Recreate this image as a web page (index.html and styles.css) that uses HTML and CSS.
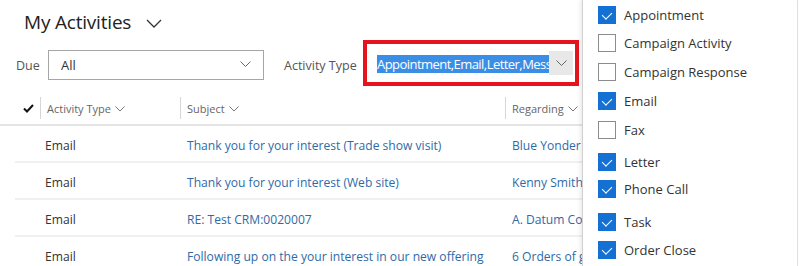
FILE: index.html
```html
<!DOCTYPE html>
<html>
<head>
<meta charset="utf-8">
<link rel="stylesheet" href="styles.css">
</head>
<body>
<div class="page">
  <div class="title-row">
    <h1 class="title">My Activities</h1>
    <svg class="title-chev" width="16" height="9" viewBox="0 0 16 9"><path d="M1 1 L8 8 L15 1" fill="none" stroke="#333" stroke-width="1.3"/></svg>
  </div>
  <div class="filter-row">
    <span class="flabel due">Due</span>
    <div class="select">
      <span class="select-text">All</span>
      <svg class="chev" width="11" height="6" viewBox="0 0 11 6"><path d="M0.5 0.5 L5.5 5.5 L10.5 0.5" fill="none" stroke="#666" stroke-width="1"/></svg>
    </div>
    <span class="flabel atype">Activity Type</span>
    <div class="redbox">
      <div class="multi">
        <span class="hl">Appointment,Email,Letter,Message</span>
      </div>
      <div class="multi-btn">
        <svg width="11" height="6" viewBox="0 0 11 6"><path d="M0.5 0.5 L5.5 5.5 L10.5 0.5" fill="none" stroke="#666" stroke-width="1"/></svg>
      </div>
    </div>
  </div>
  <div class="thead">
    <div class="th check">
      <svg width="11" height="9" viewBox="0 0 11 9"><path d="M1 4.5 L4 7.5 L10 1" fill="none" stroke="#111" stroke-width="2"/></svg>
    </div>
    <div class="th sep">Activity Type <svg class="hchev" width="10" height="6" viewBox="0 0 10 6"><path d="M0.5 0.5 L5 5 L9.5 0.5" fill="none" stroke="#777" stroke-width="1"/></svg></div>
    <div class="th sep">Subject <svg class="hchev" width="10" height="6" viewBox="0 0 10 6"><path d="M0.5 0.5 L5 5 L9.5 0.5" fill="none" stroke="#777" stroke-width="1"/></svg></div>
    <div class="th sep">Regarding <svg class="hchev" width="10" height="6" viewBox="0 0 10 6"><path d="M0.5 0.5 L5 5 L9.5 0.5" fill="none" stroke="#777" stroke-width="1"/></svg></div>
  </div>
  <div class="tbody">
    <div class="tr"><div></div><div class="td type">Email</div><div class="td link">Thank you for your interest (Trade show visit)</div><div class="td link">Blue Yonder Airlines</div></div>
    <div class="tr"><div></div><div class="td type">Email</div><div class="td link">Thank you for your interest (Web site)</div><div class="td link">Kenny Smith</div></div>
    <div class="tr"><div></div><div class="td type">Email</div><div class="td link">RE: Test CRM:0020007</div><div class="td link">A. Datum Corporation</div></div>
    <div class="tr"><div></div><div class="td type">Email</div><div class="td link">Following up on the your interest in our new offering</div><div class="td link">6 Orders of gloves</div></div>
  </div>
</div>
<div class="panel">
  <div class="opt"><span class="cb on"></span><span class="olabel">Appointment</span></div>
  <div class="opt g28"><span class="cb"></span><span class="olabel">Campaign Activity</span></div>
  <div class="opt"><span class="cb"></span><span class="olabel">Campaign Response</span></div>
  <div class="opt"><span class="cb on"></span><span class="olabel">Email</span></div>
  <div class="opt"><span class="cb"></span><span class="olabel">Fax</span></div>
  <div class="opt g32"><span class="cb on"></span><span class="olabel">Letter</span></div>
  <div class="opt g27"><span class="cb on"></span><span class="olabel">Phone Call</span></div>
  <div class="opt g33"><span class="cb on"></span><span class="olabel">Task</span></div>
  <div class="opt g28"><span class="cb on"></span><span class="olabel">Order Close</span></div>
</div>
</body>
</html>
```
FILE: styles.css
```css
* { box-sizing: border-box; }
html, body { margin: 0; padding: 0; }
body {
  width: 799px;
  height: 266px;
  overflow: hidden;
  position: relative;
  background: #fff;
  font-family: "Open Sans", "Noto Sans", sans-serif;
  color: #333;
}
.page { width: 799px; }
.title-row {
  height: 42px;
  display: flex;
  align-items: center;
  padding-left: 24px;
  padding-top: 2px;
}
.title {
  margin: 0;
  font-size: 19px;
  font-weight: 400;
  color: #222;
  letter-spacing: -0.2px;
}
.title-chev { margin-left: 15px; margin-top: 2px; }
.filter-row {
  height: 46px;
  display: flex;
  align-items: center;
  margin-top: -2px;
}
.flabel { font-size: 12.5px; color: #555; margin-top: 4px; }
.due { margin-left: 16px; width: 32px; }
.select {
  width: 216px;
  height: 30px;
  margin-top: 4px;
  border: 1px solid #a6a6a6;
  display: flex;
  align-items: center;
  justify-content: space-between;
  padding: 0 12px 0 12px;
}
.select-text { font-size: 13px; color: #333; }
.chev { margin-top: -2px; }
.atype { margin-left: 20px; width: 79px; }
.redbox {
  width: 216px;
  height: 46px;
  border: 4px solid #e5131d;
  display: flex;
  align-items: center;
  padding-left: 10px;
  padding-right: 2px;
}
.multi {
  width: 175px;
  overflow: hidden;
  white-space: nowrap;
  height: 18px;
  margin-top: 2px;
  display: flex;
  align-items: center;
}
.hl {
  background: #3a8ee6;
  color: #fff;
  font-size: 13px;
  line-height: 18px;
  letter-spacing: -0.55px;
}
.multi-btn {
  width: 24px;
  height: 24px;
  background: #e8e8e8;
  display: flex;
  align-items: center;
  justify-content: center;
}
.thead {
  display: grid;
  grid-template-columns: 40px 140px 325px 77px;
  height: 40px;
  width: 582px;
  padding-top: 6px;
  align-items: center;
  border-bottom: 2px solid #e4e4e4;
}
.th {
  font-size: 11px;
  color: #666;
  display: flex;
  align-items: center;
  height: 22px;
  white-space: nowrap;
  overflow: hidden;
}
.th.check { justify-content: flex-end; padding-right: 6px; }
.th.sep { border-left: 1px solid #d6d6d6; padding-left: 6px; }
.hchev { margin-left: 4px; margin-top: 1px; flex: none; }
.tbody { margin-left: 15px; width: 567px; }
.tr {
  display: grid;
  grid-template-columns: 25px 140px 325px 77px;
  height: 37px;
  padding-top: 4px;
  align-items: center;
  border-bottom: 2px solid #f0f0f0;
}
.td {
  font-size: 12.1px;
  white-space: nowrap;
  overflow: hidden;
}
.td.type { padding-left: 5px; color: #333; }
.td.link { padding-left: 7px; color: #2f6aa8; }
.panel {
  position: absolute;
  left: 582px;
  top: 0;
  width: 216px;
  height: 266px;
  background: #fff;
  border-left: 1px solid #d0d0d0;
  border-right: 1px solid #e0e0e0;
  box-shadow: -2px 0 4px rgba(0,0,0,0.08);
  padding-top: 6px;
  padding-left: 15px;
  display: flex;
  flex-direction: column;
}
.opt {
  display: flex;
  align-items: center;
  height: 18px;
  margin-top: 11px;
  flex: none;
}
.opt:first-child { margin-top: 0; }
.opt.g27 { margin-top: 9px; }
.opt.g28 { margin-top: 10px; }
.opt.g32 { margin-top: 14px; }
.opt.g33 { margin-top: 15px; }
.cb {
  width: 18px;
  height: 18px;
  border: 1px solid #8c8c8c;
  background: #fff;
  flex: none;
  position: relative;
}
.cb.on {
  background: #1470d2;
  border-color: #1470d2;
}
.cb.on::after {
  content: "";
  position: absolute;
  left: 5px;
  top: 3px;
  width: 5px;
  height: 8px;
  border-right: 1.5px solid #fff;
  border-bottom: 1.5px solid #fff;
  transform: rotate(45deg);
}
.olabel {
  margin-left: 8px;
  font-size: 13px;
  line-height: 18px;
  color: #333;
}
```
